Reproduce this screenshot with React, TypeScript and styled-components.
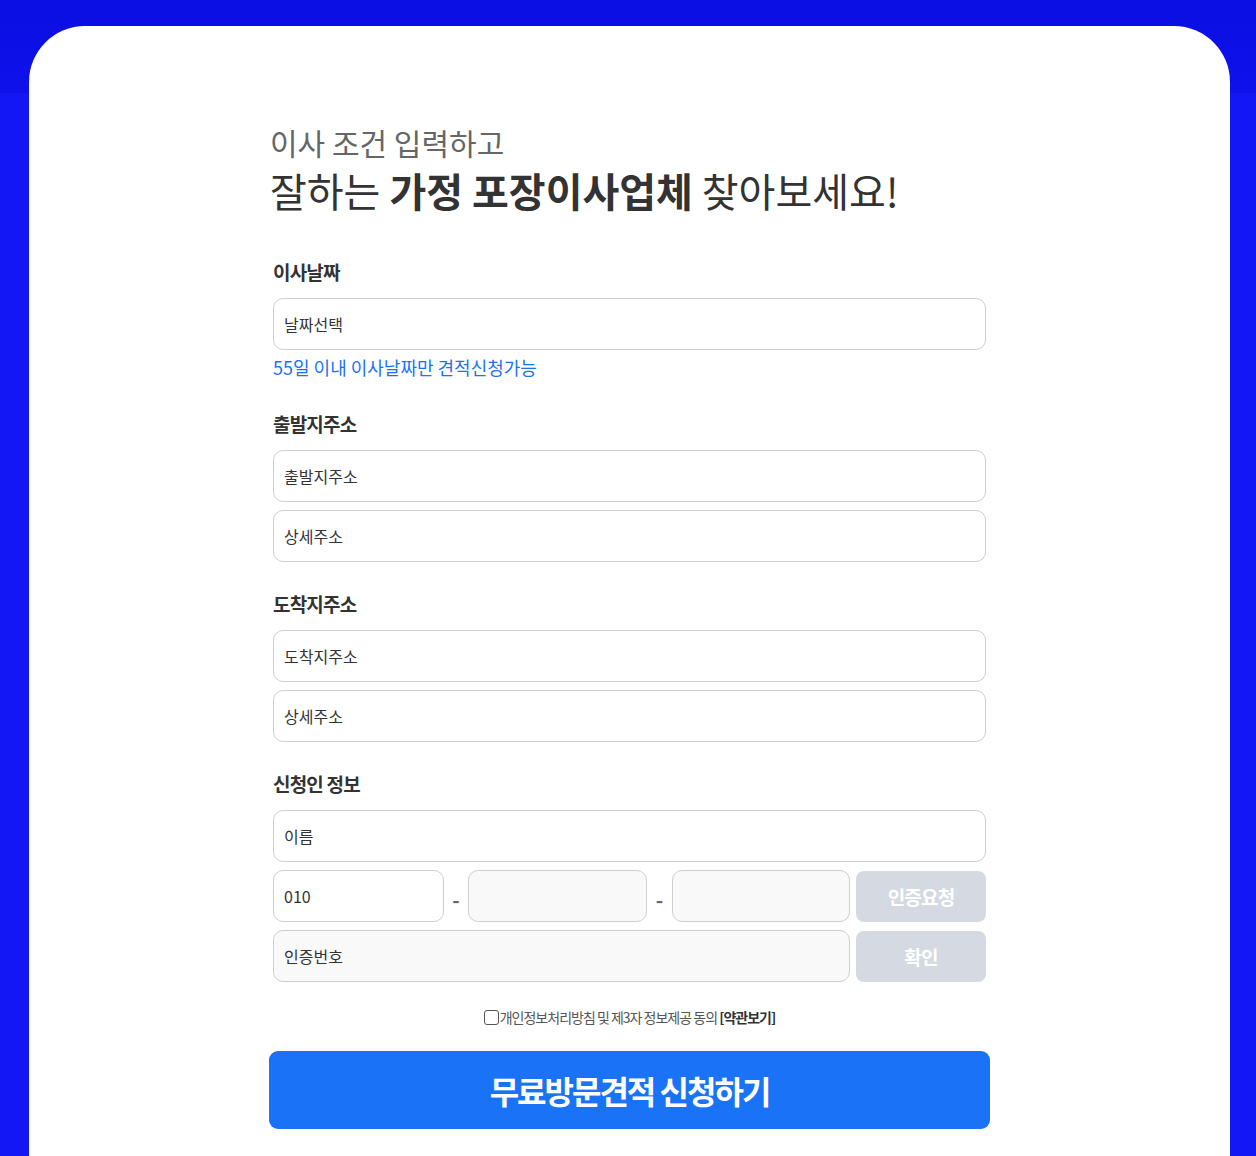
import React from "react";
import styled, { createGlobalStyle } from "styled-components";

const Global = createGlobalStyle`
  html, body { margin: 0; padding: 0; }
  body {
    background: linear-gradient(to bottom, #0c0fe2 0px, #0e11ea 93px, #1317f5 93px, #1317f5 100%);
    font-family: "Noto Sans CJK KR", "Noto Sans", sans-serif;
    min-height: 1156px;
  }
  * { box-sizing: border-box; }
`;

const Page = styled.div`
  padding: 26px 26px 0 29px;
  height: 1156px;
  overflow: hidden;
`;

const Card = styled.div`
  width: 1201px;
  min-height: 1200px;
  background: #fff;
  border-radius: 56px 56px 0 0;
  padding: 96px 244px 60px;
`;

const Head = styled.div`
  margin-left: -3px;
  margin-bottom: 42px;
`;

const Sub = styled.div`
  font-size: 30px;
  line-height: 40px;
  color: #666;
  font-weight: 400;
`;

const Title = styled.h1`
  margin: 2px 0 0;
  font-size: 40px;
  line-height: 52px;
  font-weight: 400;
  color: #333;
  b { font-weight: 700; }
`;

const Section = styled.section`
  display: flex;
  flex-direction: column;
  gap: 8px;
  margin-bottom: 28px;
`;

const Label = styled.div`
  font-size: 19px;
  font-weight: 700;
  color: #333;
  line-height: 28px;
  letter-spacing: -0.8px;
  margin-bottom: 4px;
`;

const Field = styled.div<{ $gray?: boolean; $w?: number }>`
  height: 52px;
  border: 1px solid #cfcfcf;
  border-radius: 10px;
  background: ${(p) => (p.$gray ? "#f9f9f9" : "#fff")};
  display: flex;
  align-items: center;
  padding: 0 10px;
  font-size: 16px;
  color: #333;
  flex: ${(p) => (p.$w ? `0 0 ${p.$w}px` : "1 1 auto")};
`;

const Hint = styled.div`
  font-size: 18px;
  color: #1a73f5;
  line-height: 24px;
  margin: -3px 0 3px;
`;

const Row = styled.div`
  display: flex;
  align-items: center;
`;

const Dash = styled.span<{ $w: number }>`
  flex: 0 0 ${(p) => p.$w}px;
  text-align: center;
  color: #666;
  font-size: 20px;
  font-weight: 700;
  padding-top: 6px;
`;

const GrayBtn = styled.div`
  flex: 0 0 130px;
  height: 51px;
  margin-left: 6px;
  background: #d5dae2;
  border-radius: 8px;
  color: #fff;
  font-weight: 700;
  font-size: 19px;
  letter-spacing: -0.8px;
  display: flex;
  align-items: center;
  justify-content: center;
`;

const Agree = styled.label`
  display: flex;
  justify-content: center;
  align-items: center;
  font-size: 14px;
  color: #555;
  letter-spacing: -1px;
  margin-top: -3px;
  b { color: #333; font-weight: 700; }
`;

const Box = styled.span`
  width: 15px;
  height: 15px;
  border: 1px solid #555;
  border-radius: 3px;
  margin-right: 1px;
  background: #fff;
`;

const Submit = styled.button`
  display: flex;
  align-items: center;
  justify-content: center;
  margin: 24px -4px 0;
  width: calc(100% + 8px);
  height: 78px;
  border: 0;
  border-radius: 9px;
  background: #1a73f7;
  color: #fff;
  font-family: inherit;
  font-size: 32px;
  font-weight: 700;
  letter-spacing: -2px;
`;

export default function App() {
  return (
    <>
      <Global />
      <Page>
        <Card>
          <Head>
            <Sub>이사 조건 입력하고</Sub>
            <Title>
              잘하는 <b>가정 포장이사업체</b> 찾아보세요!
            </Title>
          </Head>

          <Section>
            <Label>이사날짜</Label>
            <Field>날짜선택</Field>
            <Hint>55일 이내 이사날짜만 견적신청가능</Hint>
          </Section>

          <Section>
            <Label>출발지주소</Label>
            <Field>출발지주소</Field>
            <Field>상세주소</Field>
          </Section>

          <Section>
            <Label>도착지주소</Label>
            <Field>도착지주소</Field>
            <Field>상세주소</Field>
          </Section>

          <Section>
            <Label>신청인 정보</Label>
            <Field>이름</Field>
            <Row>
              <Field $w={171}>010</Field>
              <Dash $w={24}>-</Dash>
              <Field $gray $w={179} />
              <Dash $w={25}>-</Dash>
              <Field $gray $w={178} />
              <GrayBtn>인증요청</GrayBtn>
            </Row>
            <Row>
              <Field $gray>인증번호</Field>
              <GrayBtn>확인</GrayBtn>
            </Row>
          </Section>

          <Agree>
            <Box />
            개인정보처리방침 및 제3자 정보제공 동의&nbsp;<b>[약관보기]</b>
          </Agree>
          <Submit>무료방문견적 신청하기</Submit>
        </Card>
      </Page>
    </>
  );
}
